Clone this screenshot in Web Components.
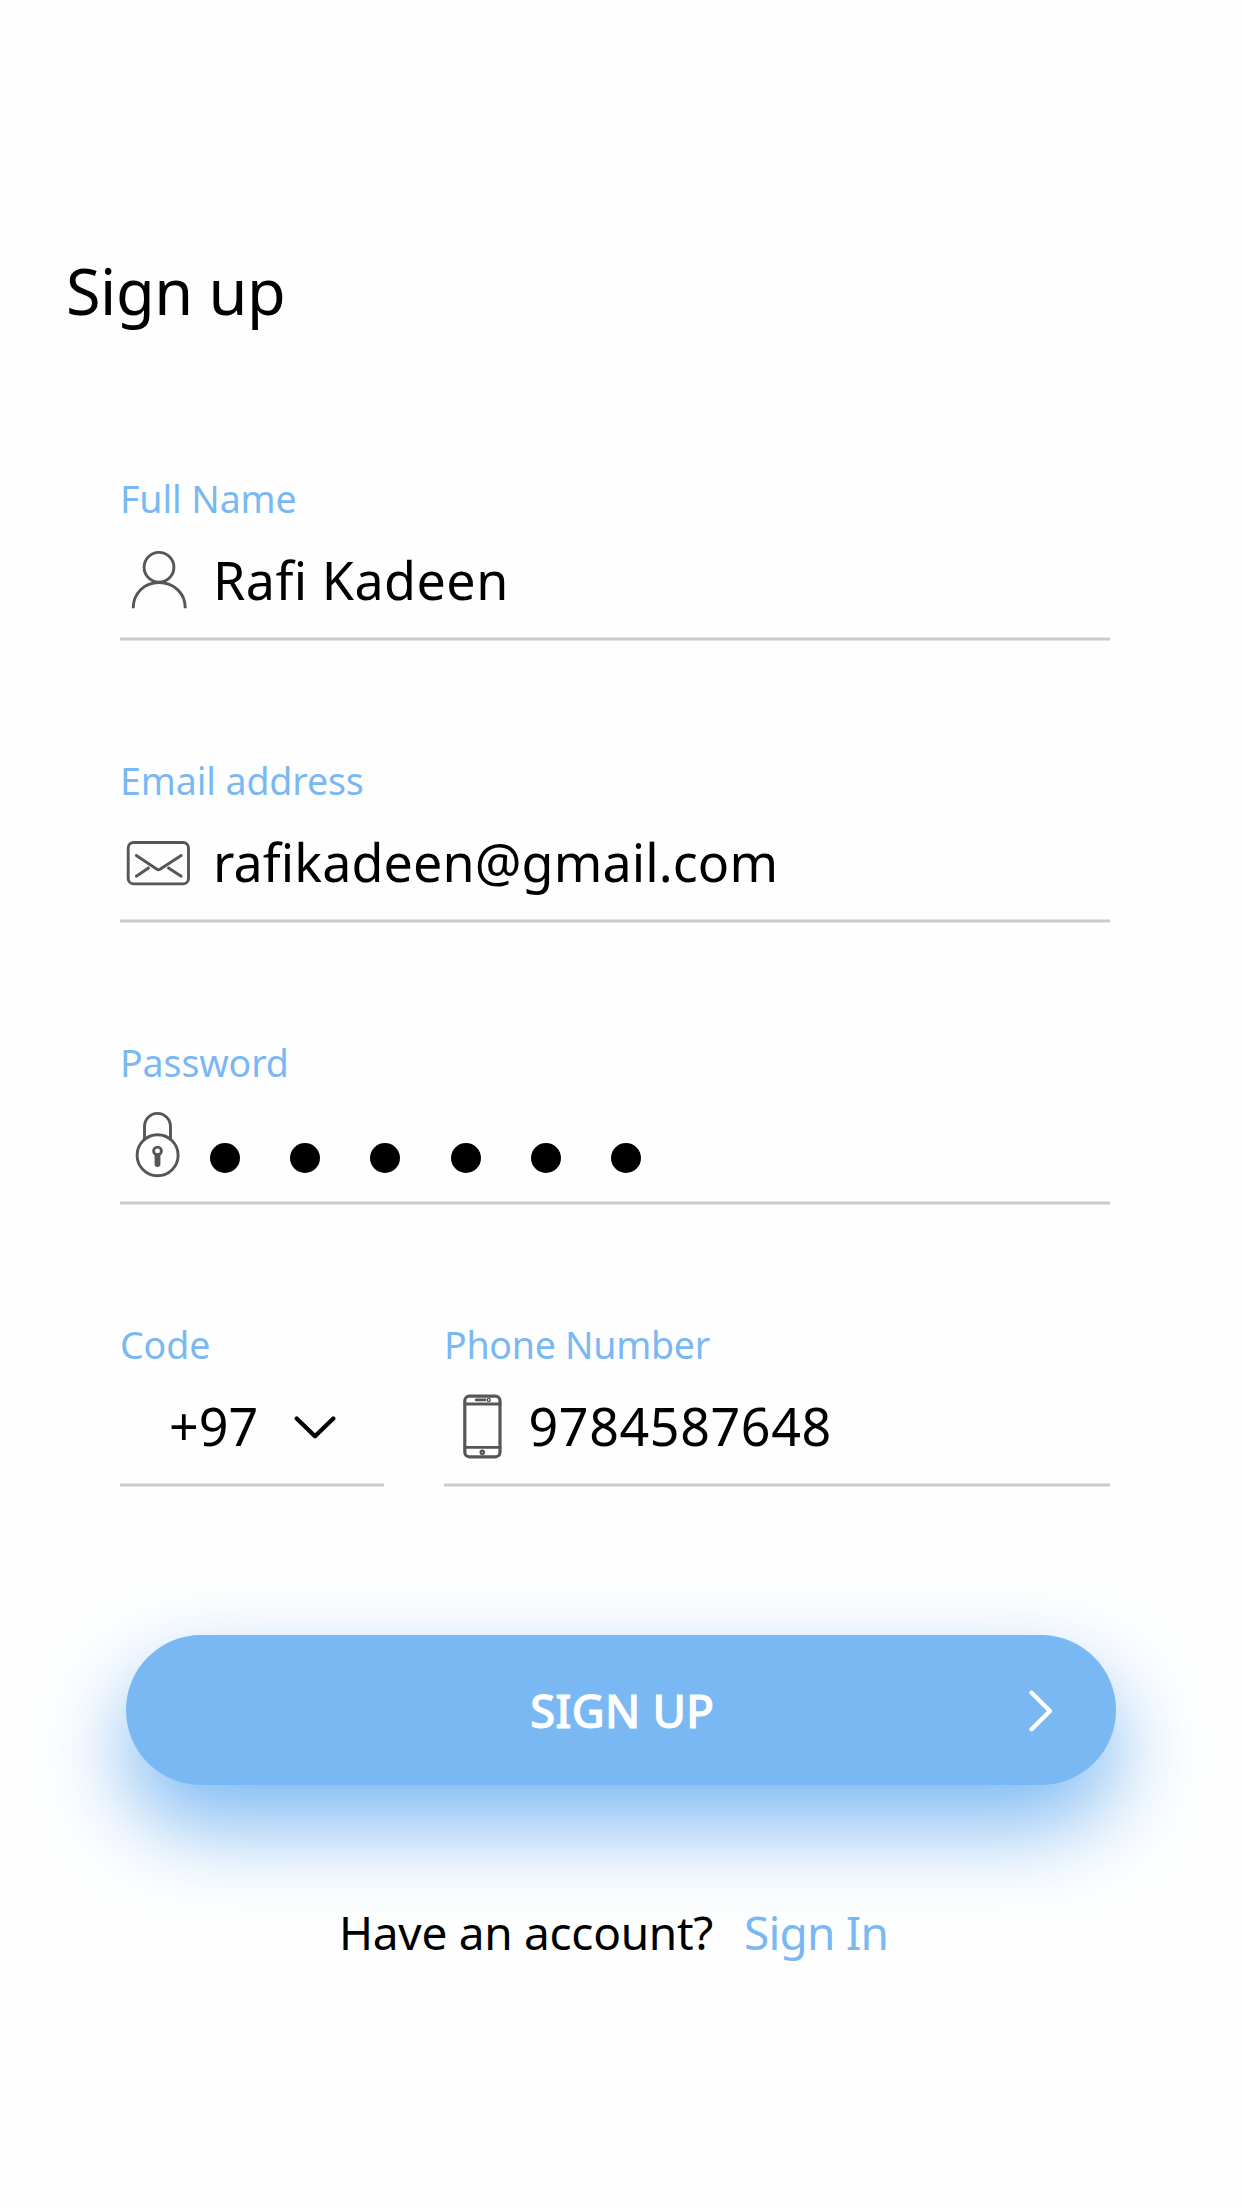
<!DOCTYPE html>
<html lang="en">
<head>
<meta charset="utf-8">
<title>Sign up</title>
<style>
  html, body { margin: 0; background: #fefefe; }
  body { font-family: "Noto Sans", "Open Sans", sans-serif; color: #000; }
</style>
</head>
<body>
<sign-up-screen></sign-up-screen>

<script>
const define = (name, html) => {
  const template = document.createElement('template');
  template.innerHTML = html;
  customElements.define(name, class extends HTMLElement {
    constructor() {
      super();
      this.attachShadow({ mode: 'open' }).append(template.content.cloneNode(true));
    }
  });
};

const icons = {
  user: '<circle cx="39" cy="26.3" r="14.9"/><path d="M13.200 67.300C13.200 52 24.500 41.500 39 41.500S65.300 52 65.300 67.300" stroke-linecap="butt"/>',
  mail: '<rect x="8.200" y="19.500" width="60.300" height="41.400" rx="5.500"/><path d="M16.300 32.500 37 46.200Q38.500 47.200 40 46.200L61.200 32.500M16.300 53.200 28.500 45M61.200 53.200 48.500 45"/>',
  lock: '<circle cx="37.600" cy="50.300" r="20.500"/><path d="M24.500 34V21.700a13 13.300 0 0 1 26 0V34"/><circle cx="37.500" cy="46" r="3.900"/><path d="M37.500 51V59" stroke-width="5.800"/>',
  phone: '<rect x="20.800" y="9.200" width="35.200" height="60.600" rx="4.500" stroke-width="3.200"/><path d="M21 17H56M21 60.400H56"/><path d="M32.300 12.900H41" stroke-width="2.900"/><circle cx="44.700" cy="12.900" r="1.500" stroke-width="1.400"/><circle cx="38.300" cy="65.300" r="1.700" stroke-width="2.200"/>'
};

customElements.define('field-icon', class extends HTMLElement {
  connectedCallback() {
    this.attachShadow({ mode: 'open' }).innerHTML = `
      <style>
        :host { display: block; flex: none; width: 76px; height: 77px; }
        svg { display: block; fill: none; stroke: #565656; stroke-width: 2.900; stroke-linecap: round; stroke-linejoin: round; }
      </style>
      <svg width="76" height="77" viewBox="0 0 76 77" aria-hidden="true">${icons[this.getAttribute('name')]}</svg>`;
  }
});

customElements.define('chevron-icon', class extends HTMLElement {
  connectedCallback() {
    const down = this.getAttribute('direction') === 'down';
    const [w, h, d] = down ? [42, 26, 'M2.700 4.500 21 22.300 39.300 4.500'] : [26, 42, 'M3.600 2.700 22 21 3.600 39.300'];
    this.attachShadow({ mode: 'open' }).innerHTML = `
      <style>
        :host { display: block; flex: none; width: ${w}px; height: ${h}px; }
        svg { display: block; fill: none; stroke: currentColor; stroke-width: 4.300; stroke-linecap: round; stroke-linejoin: round; }
      </style>
      <svg width="${w}" height="${h}" viewBox="0 0 ${w} ${h}" aria-hidden="true"><path d="${d}"/></svg>`;
  }
});

define('password-dots', `
  <style>
    :host { display: flex; gap: 50.200px; padding: 28px 0 0 14px; }
    i { width: 30px; height: 30px; border-radius: 50%; background: #000; }
  </style>
  <i></i><i></i><i></i><i></i><i></i><i></i>`);

define('form-field', `
  <style>
    :host { display: block; box-sizing: border-box; height: 167px; }
    .label { height: 48px; font-size: 37.500px; line-height: 50px; color: #7ab8f3; white-space: nowrap; letter-spacing: var(--label-spacing, -0.100px); }
    .row { display: flex; align-items: center; height: 115px; font-size: 52px; line-height: 72px; white-space: nowrap; letter-spacing: var(--value-spacing, 0); }
    .rule { height: 2px; border: solid #e5e5e5; border-width: 1px 0; background: #cbcbcb; }
  </style>
  <div class="label"><slot name="label"></slot></div>
  <div class="row"><slot name="icon"></slot><slot></slot></div>
  <div class="rule"></div>`);

define('pill-button', `
  <style>
    :host { display: block; }
    button { display: grid; grid-template-columns: 1fr auto 1fr; align-items: center; box-sizing: border-box; width: 990px; height: 150px; padding: 0 62px 0 64px; border: 0; border-radius: 75px; background: #7ab8f3; color: #fff; font: 500 46px/64px "Noto Sans", "Open Sans", sans-serif; letter-spacing: -.100px; box-shadow: 0 40px 88px #7ab8f3; }
    .label { grid-column: 2; padding-bottom: 1px; -webkit-text-stroke: .800px #fff; }
    .end { justify-self: end; padding-top: 2px; }
  </style>
  <button type="button"><span class="label"><slot></slot></span><span class="end"><slot name="end"></slot></span></button>`);

define('account-prompt', `
  <style>
    :host { display: flex; font-size: 46px; line-height: 64px; white-space: nowrap; letter-spacing: -.290px; }
    ::slotted(a) { margin-left: 31px; color: #7ab8f3; text-decoration: none; letter-spacing: -.800px; }
  </style>
  <slot></slot>`);

define('sign-up-screen', `
  <style>
    :host { display: flex; flex-direction: column; box-sizing: border-box; width: 1242px; height: 2208px; padding: 251px 0 0; overflow: hidden; background: #fefefe; }
    h1 { margin: 0 0 143px 66px; font-size: 63px; font-weight: 400; line-height: 80px; letter-spacing: -.470px; }
    form { display: flex; flex-direction: column; gap: 115px; width: 990px; margin-left: 120px; }
    .pair { display: grid; grid-template-columns: 264px 666px; gap: 60px; }
    .value { margin-left: 17px; }
    .code { margin-left: 49px; }
    .code + chevron-icon { margin: 2px 0 0 36px; }
    .phone { margin-left: 8.500px; }
    pill-button { margin: 148px 0 0 126px; }
    account-prompt { margin: 115px 0 0 339px; }
  </style>
  <h1>Sign up</h1>
  <form>
    <form-field style="--value-spacing:.480px"><span slot="label">Full Name</span><field-icon slot="icon" name="user"></field-icon><span class="value">Rafi Kadeen</span></form-field>
    <form-field style="--value-spacing:.110px"><span slot="label">Email address</span><field-icon slot="icon" name="mail"></field-icon><span class="value">rafikadeen@gmail.com</span></form-field>
    <form-field><span slot="label">Password</span><field-icon slot="icon" name="lock"></field-icon><password-dots></password-dots></form-field>
    <div class="pair">
      <form-field style="--value-spacing:.060px"><span slot="label">Code</span><span class="code">+97</span><chevron-icon direction="down"></chevron-icon></form-field>
      <form-field style="--value-spacing:.590px;--label-spacing:-.260px"><span slot="label">Phone Number</span><field-icon slot="icon" name="phone"></field-icon><span class="phone">9784587648</span></form-field>
    </div>
  </form>
  <pill-button>SIGN UP<chevron-icon slot="end" direction="right"></chevron-icon></pill-button>
  <account-prompt><span>Have an account?</span><a href="#">Sign In</a></account-prompt>`);
</script>
</body>
</html>
